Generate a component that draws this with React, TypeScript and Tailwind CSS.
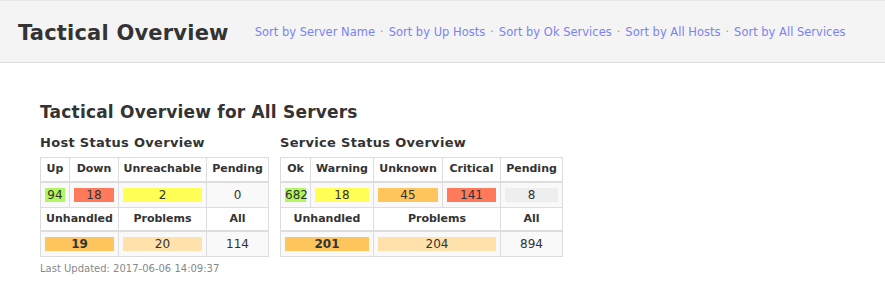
import React from "react";

type Cell = { value: string; color?: string; bold?: boolean };

interface StatusTableProps {
  title: string;
  widths: number[];
  head1: { label: string; span?: number }[];
  row1: Cell[];
  head2: { label: string; span: number }[];
  row2: Cell[];
}

const font = { fontFamily: "'DejaVu Sans', Verdana, sans-serif" };

function ValueCell({ cell, span }: { cell: Cell; span?: number }) {
  return (
    <td colSpan={span} className="border border-[#dddddd] bg-[#f9f9f9] px-[4px] py-[5px] text-center">
      {cell.color ? (
        <div
          className={`h-[14px] leading-[14px] text-[12px] text-[#333333] ${cell.bold ? "font-bold" : ""} ${cell.color}`}
        >
          {cell.value}
        </div>
      ) : (
        <div className="h-[14px] leading-[14px] text-[12px] text-[#333333]">{cell.value}</div>
      )}
    </td>
  );
}

function StatusTable({ title, widths, head1, row1, head2, row2 }: StatusTableProps) {
  const total = widths.reduce((a, b) => a + b, 0);
  return (
    <div className="flex flex-col">
      <h3 className="text-[13px] font-bold text-[#333333] leading-[16px] mb-[6px] tracking-[0.3px]">{title}</h3>
      <table className="table-fixed border-collapse" style={{ width: total }}>
        <colgroup>
          {widths.map((w, i) => (
            <col key={i} style={{ width: w }} />
          ))}
        </colgroup>
        <tbody>
          <tr className="h-[24px]">
            {head1.map((h) => (
              <th
                key={h.label}
                className="border border-[#dddddd] border-b-2 bg-white px-0 text-center text-[11px] font-bold text-[#333333] whitespace-nowrap"
              >
                {h.label}
              </th>
            ))}
          </tr>
          <tr className="h-[25px]">
            {row1.map((c, i) => (
              <ValueCell key={i} cell={c} />
            ))}
          </tr>
          <tr className="h-[24px]">
            {head2.map((h) => (
              <th
                key={h.label}
                colSpan={h.span}
                className="border border-[#dddddd] border-b-2 bg-white px-0 text-center text-[11px] font-bold text-[#333333]"
              >
                {h.label}
              </th>
            ))}
          </tr>
          <tr className="h-[25px]">
            {row2.map((c, i) => (
              <ValueCell key={i} cell={c} span={head2[i].span} />
            ))}
          </tr>
        </tbody>
      </table>
    </div>
  );
}

const links = [
  "Sort by Server Name",
  "Sort by Up Hosts",
  "Sort by Ok Services",
  "Sort by All Hosts",
  "Sort by All Services",
];

export default function App() {
  return (
    <div className="w-[885px] h-[293px] bg-white overflow-hidden" style={font}>
      <div className="h-[63px] bg-[#f4f4f4] border-t border-[#e8e8e8] border-b border-b-[#dddddd] flex items-center pl-[18px] pt-[3px]">
        <h1 className="text-[21px] font-bold text-[#333333] leading-none tracking-[0.2px]">Tactical Overview</h1>
        <div className="ml-[26px] flex items-center text-[11.5px] text-[#7b83f0]">
          {links.map((l, i) => (
            <React.Fragment key={l}>
              {i > 0 && <span className="mx-[5px] text-[#c49a4a]">·</span>}
              <a className="cursor-pointer">{l}</a>
            </React.Fragment>
          ))}
        </div>
      </div>

      <div className="pl-[40px] pt-[39px]">
        <h2 className="text-[17px] font-bold text-[#333333] leading-[20px] tracking-[0.2px] mb-[13px]">
          Tactical Overview for All Servers
        </h2>
        <div className="flex gap-[11px]">
          <StatusTable
            title="Host Status Overview"
            widths={[29, 49, 88, 62]}
            head1={[{ label: "Up" }, { label: "Down" }, { label: "Unreachable" }, { label: "Pending" }]}
            row1={[
              { value: "94", color: "bg-[#b2f65f]" },
              { value: "18", color: "bg-[#ff7a5a]" },
              { value: "2", color: "bg-[#ffff55]" },
              { value: "0" },
            ]}
            head2={[
              { label: "Unhandled", span: 2 },
              { label: "Problems", span: 1 },
              { label: "All", span: 1 },
            ]}
            row2={[
              { value: "19", color: "bg-[#ffc55d]", bold: true },
              { value: "20", color: "bg-[#ffe2ab]" },
              { value: "114" },
            ]}
          />
          <StatusTable
            title="Service Status Overview"
            widths={[30, 63, 69, 58, 62]}
            head1={[
              { label: "Ok" },
              { label: "Warning" },
              { label: "Unknown" },
              { label: "Critical" },
              { label: "Pending" },
            ]}
            row1={[
              { value: "682", color: "bg-[#b2f65f]" },
              { value: "18", color: "bg-[#ffff55]" },
              { value: "45", color: "bg-[#ffc55d]" },
              { value: "141", color: "bg-[#ff7a5a]" },
              { value: "8", color: "bg-[#eeeeee]" },
            ]}
            head2={[
              { label: "Unhandled", span: 2 },
              { label: "Problems", span: 2 },
              { label: "All", span: 1 },
            ]}
            row2={[
              { value: "201", color: "bg-[#ffc55d]", bold: true },
              { value: "204", color: "bg-[#ffe2ab]" },
              { value: "894" },
            ]}
          />
        </div>
        <div className="mt-[6px] text-[10px] text-[#888888] leading-[12px]">Last Updated: 2017-06-06 14:09:37</div>
      </div>
    </div>
  );
}
